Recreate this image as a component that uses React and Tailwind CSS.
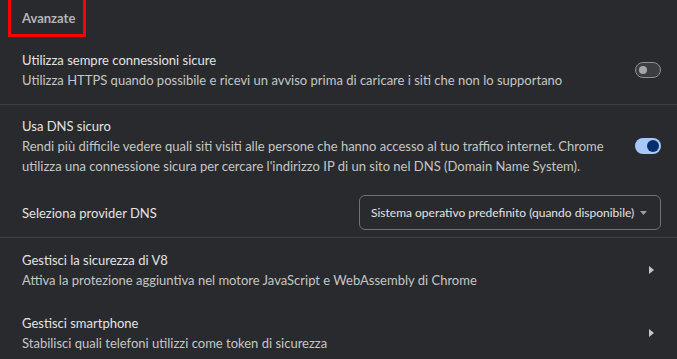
import React, { useState } from 'react';

const Toggle = ({ on, onChange }) => (
  <button
    onClick={onChange}
    className={`relative w-[26px] h-[16px] rounded-full shrink-0 ${
      on ? 'bg-[#a8c7fa]' : 'bg-[#3c3d41] border border-[#8e918f]'
    }`}
  >
    {on ? (
      <span className="absolute right-[2px] top-[2px] w-[12px] h-[12px] rounded-full bg-[#062e6f]" />
    ) : (
      <span className="absolute left-[3px] top-[3px] w-[8px] h-[8px] rounded-full bg-[#a3a6a8]" />
    )}
  </button>
);

const Arrow = () => (
  <div className="w-[20px] flex justify-center shrink-0">
    <svg width="5" height="8" viewBox="0 0 5 8">
      <path d="M0 0 L5 4 L0 8 Z" fill="#c4c7c5" />
    </svg>
  </div>
);

const App = () => {
  const [https, setHttps] = useState(false);
  const [dns, setDns] = useState(true);

  return (
    <div
      className="w-[677px] h-[359px] overflow-hidden bg-[#292a2e] text-[13px] leading-[20px]"
      style={{ fontFamily: 'Lato, "Noto Sans", sans-serif' }}
    >
      {/* titolo sezione */}
      <div className="pl-[8px]">
        <div className="w-[78px] h-[37px] border-[3px] border-[#ff0000] border-t-0 flex items-center pl-[11px] pt-[1px]">
          <span className="font-bold text-[#b3b6b9]">Avanzate</span>
        </div>
      </div>

      {/* HTTPS */}
      <div className="flex items-center pl-[22px] pr-[16px] pt-[13px] pb-[14px] border-b border-[#3f4043]">
        <div className="flex-1">
          <div className="text-[#e3e3e3]">Utilizza sempre connessioni sicure</div>
          <div className="text-[#c4c7c5]">
            Utilizza HTTPS quando possibile e ricevi un avviso prima di caricare i siti che non lo supportano
          </div>
        </div>
        <Toggle on={https} onChange={() => setHttps(!https)} />
      </div>

      {/* DNS sicuro */}
      <div className="pl-[22px] pr-[16px] border-b border-[#3f4043]">
        <div className="flex items-center pt-[11px]">
          <div className="flex-1 pr-[20px]">
            <div className="text-[#e3e3e3]">Usa DNS sicuro</div>
            <div className="text-[#c4c7c5]">
              Rendi più difficile vedere quali siti visiti alle persone che hanno accesso al tuo traffico internet. Chrome
              utilizza una connessione sicura per cercare l'indirizzo IP di un sito nel DNS (Domain Name System).
            </div>
          </div>
          <Toggle on={dns} onChange={() => setDns(!dns)} />
        </div>
        <div className="flex items-center justify-between pt-[19px] pb-[7px]">
          <span className="text-[#e3e3e3]">Seleziona provider DNS</span>
          <div className="w-[302px] h-[35px] rounded-[6px] border border-[#6f7274] flex items-center justify-between pl-[11px] pr-[13px]">
            <span className="text-[#e3e3e3] text-[12px] whitespace-nowrap">
              Sistema operativo predefinito (quando disponibile)
            </span>
            <svg width="7" height="4" viewBox="0 0 7 4">
              <path d="M0 0 L7 0 L3.5 4 Z" fill="#9aa0a6" />
            </svg>
          </div>
        </div>
      </div>

      {/* V8 */}
      <div className="flex items-center pl-[22px] pr-[16px] pt-[12px] pb-[11px]">
        <div className="flex-1">
          <div className="text-[#e3e3e3]">Gestisci la sicurezza di V8</div>
          <div className="text-[#c4c7c5]">Attiva la protezione aggiuntiva nel motore JavaScript e WebAssembly di Chrome</div>
        </div>
        <Arrow />
      </div>

      {/* smartphone */}
      <div className="flex items-center pl-[22px] pr-[16px] pt-[12px] pb-[12px]">
        <div className="flex-1">
          <div className="text-[#e3e3e3]">Gestisci smartphone</div>
          <div className="text-[#c4c7c5]">Stabilisci quali telefoni utilizzi come token di sicurezza</div>
        </div>
        <Arrow />
      </div>
    </div>
  );
};

export default App;
